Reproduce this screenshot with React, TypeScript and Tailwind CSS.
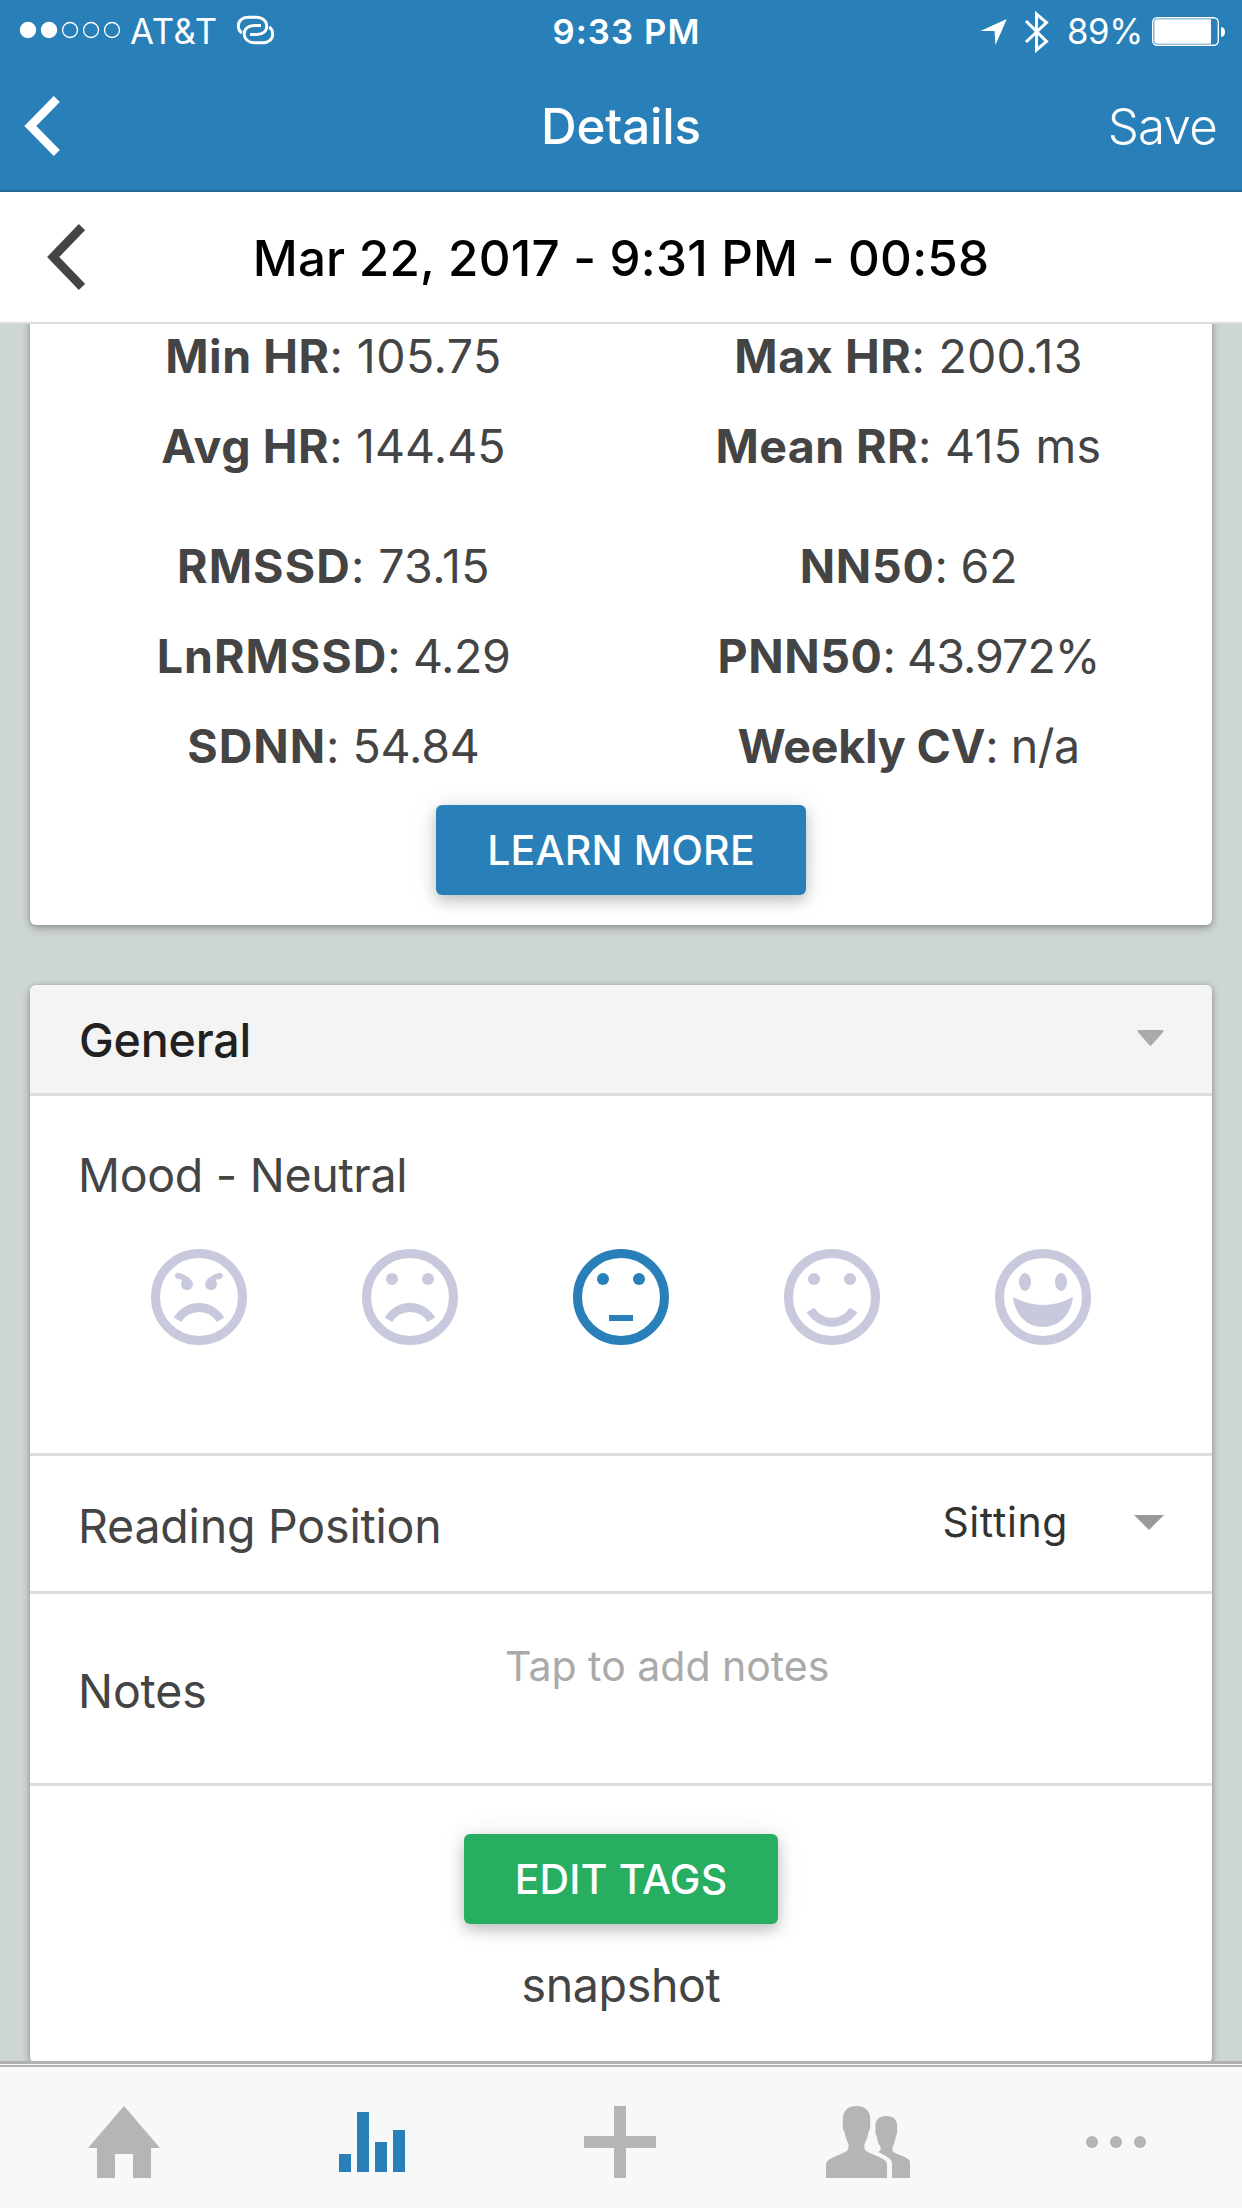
import type { ReactNode } from 'react';

type Stat = { label: string; value: string; labelClass: string; valueClass: string };

const summaryLeft: Stat[] = [
  { label: 'Min HR', value: ': 105.75', labelClass: 'tracking-[0.5px]', valueClass: 'tracking-[0.45px]' },
  { label: 'Avg HR', value: ': 144.45', labelClass: 'tracking-[0.6px]', valueClass: 'tracking-[0.1px]' },
];
const summaryRight: Stat[] = [
  { label: 'Max HR', value: ': 200.13', labelClass: 'tracking-[0.6px]', valueClass: 'tracking-[0.25px]' },
  { label: 'Mean RR', value: ': 415 ms', labelClass: 'tracking-[0.4px]', valueClass: 'tracking-[0.3px]' },
];
const hrvLeft: Stat[] = [
  { label: 'RMSSD', value: ': 73.15', labelClass: 'tracking-[1.1px]', valueClass: 'tracking-[0.4px]' },
  { label: 'LnRMSSD', value: ': 4.29', labelClass: 'tracking-[1px]', valueClass: 'tracking-[-0.4px]' },
  { label: 'SDNN', value: ': 54.84', labelClass: 'tracking-[1px]', valueClass: 'tracking-[-0.1px]' },
];
const hrvRight: Stat[] = [
  { label: 'NN50', value: ': 62', labelClass: 'tracking-[0.7px]', valueClass: 'tracking-[-0.2px]' },
  { label: 'PNN50', value: ': 43.972%', labelClass: 'tracking-[0.6px]', valueClass: 'tracking-[-0.95px]' },
  { label: 'Weekly CV', value: ': n/a', labelClass: 'tracking-[-0.2px]', valueClass: 'tracking-[-0.5px]' },
];

function StatColumn({ stats }: { stats: Stat[] }) {
  return (
    <div className="flex flex-col">
      {stats.map((s) => (
        <div key={s.label} className="text-center text-[46.5px] leading-[90px] whitespace-pre">
          <b className={`font-bold ${s.labelClass}`}>{s.label}</b>
          <span className={s.valueClass}>{s.value}</span>
        </div>
      ))}
    </div>
  );
}

function Face({ active = false, children }: { active?: boolean; children: ReactNode }) {
  return (
    <svg
      viewBox="0 0 96 96"
      className={active ? 'size-24 text-[#2980b9]' : 'size-24 text-[#c9c9dd]'}
      fill="none"
      stroke="currentColor"
      strokeWidth="9"
    >
      <circle cx="48" cy="48" r="43.5" />
      {children}
    </svg>
  );
}

function Eyes({ ry = 6, cy = 30 }: { ry?: number; cy?: number }) {
  return (
    <g fill="currentColor" stroke="none">
      <ellipse cx="30" cy={cy} rx="6" ry={ry} />
      <ellipse cx="66" cy={cy} rx="6" ry={ry} />
    </g>
  );
}

function StatusBar() {
  return (
    <div className="grid h-[63px] grid-cols-[1fr_auto_1fr] items-center text-[34.7px] leading-[63px]">
      <div className="flex items-center pl-[19px]">
        <svg className="-mt-[3px] h-5 w-[104px]" viewBox="0 0 104 20">
          <circle cx="9" cy="10" r="8.2" fill="#fff" />
          <circle cx="30" cy="10" r="8.2" fill="#fff" />
          <g fill="none" stroke="#fff" strokeWidth="1.3">
            <circle cx="51" cy="10" r="7.5" />
            <circle cx="72" cy="10" r="7.5" />
            <circle cx="93" cy="10" r="7.5" />
          </g>
        </svg>
        <span className="ml-[7px] tracking-[0.7px]">AT&amp;T</span>
        <svg className="-mt-[3px] ml-[17px] h-8 w-10" viewBox="235 14 40 32" fill="none" stroke="#fff" strokeWidth="2.9">
          <path d="M241.8 33C239 31 238.3 28.5 238.3 26C238.3 20.5 242.5 17.2 248 17.2H256C262.5 17.2 266.8 21 266.8 26.3C266.8 31 263 34.5 257 34.5H250" />
          <path d="M269.2 27C272 29 272.7 31.5 272.7 34C272.7 39.5 268.5 42.8 263 42.8H255C248.5 42.8 244.2 39 244.2 33.7C244.2 29 248 25.5 254 25.5H261" />
        </svg>
      </div>
      <span className="pl-[11px] font-semibold tracking-[1.1px]">9:33 PM</span>
      <div className="flex items-center justify-end pr-[15px]">
        <svg className="h-11 w-[72px]" viewBox="980 9 72 44">
          <path d="M1007.8 18L981.4 30H995.5L996.500 44Z" fill="#fff" />
          <path d="M1027 20L1047.5 40.5L1037.5 49V13L1047.5 21.5L1027 41" fill="none" stroke="#fff" strokeWidth="3" />
        </svg>
        <span className="ml-4 tracking-[-0.33px]">89%</span>
        <svg className="ml-[8px] h-[31px] w-[76px]" viewBox="1151 15 76 31">
          <rect x="1152.7" y="16.7" width="65.6" height="27.6" rx="4.5" fill="none" stroke="#fff" strokeWidth="1.4" />
          <path d="M1157 18.3H1211V42.8H1157Q1154.3 42.8 1154.3 40V21Q1154.3 18.3 1157 18.3Z" fill="#fff" />
          <path d="M1221 26Q1225 26.5 1225 31T1221 36Z" fill="#fff" />
        </svg>
      </div>
    </div>
  );
}

function TabBar() {
  return (
    <nav className="h-[147px] shrink-0 border-t-[3px] border-[#b0b1b1] bg-[#f8f8f8]">
      <div className="mt-px grid h-[143px] grid-cols-5 items-center border-t-2 border-[#b2b2b2] pt-[9px] pr-0.5 text-[#b5b5b5]">
        <svg className="size-[72px] place-self-center" viewBox="88 2106 72 72" fill="currentColor">
          <path d="M124 2106L160 2148H151V2178H133V2154H115V2178H97V2148H88Z" />
        </svg>
        <svg className="size-[72px] place-self-center text-[#2980b9]" viewBox="336 2106 72 72" fill="currentColor">
          <path d="M339 2154H351V2172H339ZM357 2112H369V2172H357ZM375 2142H387V2172H375ZM393 2130H405V2172H393Z" />
        </svg>
        <svg className="size-[72px] place-self-center" viewBox="584 2106 72 72" fill="currentColor">
          <path d="M614 2106H626V2136H656V2148H626V2178H614V2148H584V2136H614Z" />
        </svg>
        <svg className="h-[72px] w-[84px] place-self-center" viewBox="0 0 84 72" fill="currentColor">
          <path d="M0 72V59C0 56 1 54.5 4 53C9 50 15 48.5 20 45.5C22.5 44 22.8 42 22.5 38C20.5 34.5 19.5 31 18.5 26C16.8 24 16.3 19 17 17C15.5 7 20 0 30.5 0S45.5 7 44 17C44.7 19 44.2 24 42.5 26C41.5 31 40.5 34.5 38.5 38C38.2 42 38.5 44 41 45.5C46 48.5 52 50 57 53C60 54.5 61 56 61 59V72Z" />
          <path d="M66 72V57C65.5 52.5 61 50.5 52 46C54.5 45 55 44 54.7 41.5C52.5 38.5 51.5 34.5 50.8 30.5C49.5 28.5 49 25 49.6 23C48.5 15 52 10 60.3 10S72 15 71 23C71.6 25 71 28.5 69.8 30.5C69 34.5 68 38.5 66.5 41.5C66.2 44.5 66.5 46 69 47C74 49 78 50.5 82 53C83.5 54 84 55 84 57V72Z" />
        </svg>
        <svg className="h-3 w-[60px] place-self-center" viewBox="0 0 60 12" fill="currentColor">
          <circle cx="6" cy="6" r="6" />
          <circle cx="30" cy="6" r="6" />
          <circle cx="54" cy="6" r="6" />
        </svg>
      </div>
    </nav>
  );
}

const cardClass =
  'rounded-md bg-white shadow-[0_3px_9px_rgba(0,0,0,0.3),0_0_4px_rgba(0,0,0,0.12)]';
const buttonClass =
  'block h-[90px] rounded-md text-center text-[41px] leading-[88px] font-medium text-white shadow-[0_6px_14px_rgba(0,0,0,0.2),0_2px_28px_rgba(0,0,0,0.1)]';

export default function App() {
  return (
    <div className="flex h-[2208px] w-[1242px] flex-col overflow-hidden bg-[#ced6d3] font-['Inter',sans-serif] text-[#444]">
      <header className="h-48 shrink-0 border-b-2 border-[#216694] bg-[#2980b9] text-white">
        <StatusBar />
        <div className="grid h-[127px] grid-cols-[1fr_auto_1fr] items-center text-[49.3px] leading-[127px]">
          <svg className="ml-6 -mt-px h-[60px] w-9" viewBox="24 96 36 60" fill="none" stroke="#fff" strokeWidth="8.5">
            <path d="M56.8 99L30.3 126L56.8 153" />
          </svg>
          <h1 className="font-medium tracking-[-0.15px]">Details</h1>
          <span className="pr-[25px] text-right font-light tracking-[-0.8px]">Save</span>
        </div>
      </header>

      <div className="flex h-[132px] shrink-0 items-center border-b-2 border-[#ddd] bg-white">
        <svg className="ml-[47px] h-[68px] w-[38px]" viewBox="48 223 38 68" fill="none" stroke="#444" strokeWidth="8.8">
          <path d="M83 227L54.2 257L83 287" />
        </svg>
        <h2 className="mr-[85px] flex-1 pt-[3px] text-center text-[49.3px] font-medium tracking-[0.23px] text-black">
          Mar 22, 2017 - 9:31 PM - 00:58
        </h2>
      </div>

      <main className="min-h-0 flex-1 overflow-hidden px-[30px]">
        <section className={`-mt-3.5 h-[615px] pt-px ${cardClass}`}>
          <div className="grid grid-cols-2 gap-y-[30px] px-4">
            <StatColumn stats={summaryLeft} />
            <StatColumn stats={summaryRight} />
            <StatColumn stats={hrvLeft} />
            <StatColumn stats={hrvRight} />
          </div>
          <button className={`mx-auto mt-3.5 w-[370px] bg-[#2980b9] tracking-[0.2px] ${buttonClass}`}>LEARN MORE</button>
        </section>

        <section className={`mt-[60px] h-[1078px] ${cardClass}`}>
          <div className="flex h-[111px] items-center justify-between rounded-t-md border-b-3 border-[#ddd] bg-[#f4f4f4] pr-12 pl-[49px]">
            <h3 className="pt-1 text-[46.5px] font-medium tracking-[-0.17px] text-[#212121]">General</h3>
            <svg className="-mt-0.5 h-4 w-[27px]" viewBox="0 0 27 16" fill="#aaa">
              <path d="M1.5 0H25.5Q27 0.5 26.2 2L14.5 15.3Q13.5 16.3 12.5 15.3L0.8 2Q0 0.5 1.5 0Z" />
            </svg>
          </div>

          <div className="h-[360px] border-b-3 border-[#ddd] pt-[51px]">
            <p className="pl-12 text-[46.5px] leading-[56px] tracking-[-0.3px]">Mood - Neutral</p>
            <div className="mt-[46px] flex justify-center gap-[115px] pr-px">
              <Face>
                <g fill="currentColor" stroke="none">
                  <path d="M27.5 23.7C34 25.5 40.5 28.5 42 35A6 6 0 1 1 30.8 32.2L31 30.8L26.200 29.700C22.5 28 24 23.300 27.5 23.7Z" />
                  <path d="M68.5 23.7C62 25.5 55.5 28.5 54 35A6 6 0 1 0 65.2 32.2L65 30.8L69.8 29.7C73.5 28 72 23.3 68.5 23.7Z" />
                </g>
                <path d="M26.5 70.7A25 25 0 0 1 69.5 70.7" />
              </Face>
              <Face>
                <Eyes />
                <path d="M26.5 70.7A25 25 0 0 1 69.5 70.7" />
              </Face>
              <Face active>
                <Eyes />
                <path d="M36 69H60" strokeWidth="6" />
              </Face>
              <Face>
                <Eyes />
                <path d="M26.5 61A25 25 0 0 0 69.5 61" />
              </Face>
              <Face>
                <Eyes ry={9} cy={33} />
                <path d="M18 48Q48 64 78 48C76 66 64 78 48 78S20 66 18 48Z" fill="currentColor" stroke="none" />
              </Face>
            </div>
          </div>

          <div className="flex h-[138px] items-center border-b-3 border-[#ddd] pr-12 pl-12">
            <span className="flex-1 pt-1.5 text-[46.5px] tracking-[-0.2px]">Reading Position</span>
            <span className="pb-0.5 text-[41px] tracking-[0.6px] text-[#333]">Sitting</span>
            <svg className="-mt-0.5 ml-[66px] h-[15px] w-[30px]" viewBox="0 0 30 15" fill="#999">
              <path d="M0 0H30L15 15Z" />
            </svg>
          </div>

          <div className="flex h-48 border-b-3 border-[#ddd] pl-12">
            <span className="w-[427px] pt-[69px] text-[46.5px] leading-[56px] tracking-[-0.15px]">Notes</span>
            <span className="pt-[44px] text-[41px] leading-[56px] text-[#aaa]">Tap to add notes</span>
          </div>

          <div className="pt-12 text-center">
            <button className={`mx-auto w-[314px] bg-[#28ae61] tracking-[0.17px] ${buttonClass}`}>EDIT TAGS</button>
            <p className="mt-4 text-[46.5px] leading-[90px] tracking-[-0.35px]">snapshot</p>
          </div>
        </section>
      </main>

      <TabBar />
    </div>
  );
}
